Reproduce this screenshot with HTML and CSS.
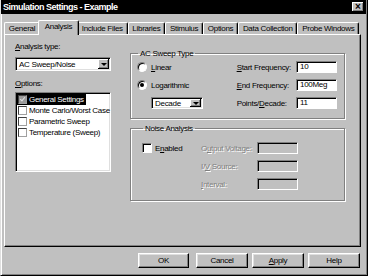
FILE: index.html
```html
<!DOCTYPE html>
<html lang="en">
<head>
  <meta charset="UTF-8">
  <title>Simulation Settings - Example</title>
  <link rel="stylesheet" href="styles.css">
</head>
<body>
  <div class="window">
    <div class="titlebar">
      <span class="title">Simulation Settings - Example</span>
      <span class="close">&#215;</span>
    </div>
    <div class="body">
      <ul class="tabs">
        <li>General</li>
        <li class="active">Analysis</li>
        <li>Include Files</li>
        <li>Libraries</li>
        <li>Stimulus</li>
        <li>Options</li>
        <li>Data Collection</li>
        <li>Probe Windows</li>
      </ul>

      <div class="panel">
        <div class="left">
          <div class="label"><u>A</u>nalysis type:</div>
          <div class="select">
            <span>AC Sweep/Noise</span>
            <span class="drop"></span>
          </div>
          <div class="label options-label"><u>O</u>ptions:</div>
          <ul class="list">
            <li class="sel"><span class="cb checked"></span><span>General Settings</span></li>
            <li><span class="cb"></span><span>Monte Carlo/Worst Case</span></li>
            <li><span class="cb"></span><span>Parametric Sweep</span></li>
            <li><span class="cb"></span><span>Temperature (Sweep)</span></li>
          </ul>
        </div>

        <div class="right">
          <fieldset class="group sweep">
            <legend>AC Sweep Type</legend>
            <div class="sweep-grid">
              <div class="radio-row"><span class="radio"></span><span><u>L</u>inear</span></div>
              <span class="field-label"><u>S</u>tart Frequency:</span>
              <span class="input">10</span>

              <div class="radio-row"><span class="radio on"></span><span>Lo<u>g</u>arithmic</span></div>
              <span class="field-label"><u>E</u>nd Frequency:</span>
              <span class="input">100Meg</span>

              <div class="select small">
                <span>Decade</span>
                <span class="drop"></span>
              </div>
              <span class="field-label">Points/<u>D</u>ecade:</span>
              <span class="input">11</span>
            </div>
          </fieldset>

          <fieldset class="group noise">
            <legend>Noise Analysis</legend>
            <div class="noise-grid">
              <div class="check-row"><span class="check"></span><span>E<u>n</u>abled</span></div>
              <span class="field-label disabled">O<u>u</u>tput Voltage:</span>
              <span class="input off"></span>

              <span></span>
              <span class="field-label disabled">I/<u>V</u> Source:</span>
              <span class="input off"></span>

              <span></span>
              <span class="field-label disabled"><u>I</u>nterval:</span>
              <span class="input off"></span>
            </div>
          </fieldset>
        </div>
      </div>

      <div class="buttons">
        <button class="btn ok">OK</button>
        <button class="btn">Cancel</button>
        <button class="btn"><u>A</u>pply</button>
        <button class="btn">Help</button>
      </div>
    </div>
  </div>
</body>
</html>
```

FILE: styles.css
```css
body {
  margin: 0;
  background: #c0c0c0;
}

.window {
  box-sizing: border-box;
  width: 368px;
  height: 276px;
  background: #c0c0c0;
  border-left: 1px solid #dfdfdf;
  border-right: 1px solid #000;
  border-bottom: 1px solid #000;
  box-shadow: inset 1px 0 #fff, inset -1px -1px #808080;
  font-family: "Liberation Sans", Arial, sans-serif;
  font-size: 8px;
  letter-spacing: -0.3px;
  color: #000;
  white-space: nowrap;
}

u {
  text-underline-offset: 1px;
}

/* title bar */
.titlebar {
  height: 14px;
  margin-right: 1px;
  padding: 0 2px;
  background: #000;
  color: #fff;
  display: flex;
  align-items: center;
  justify-content: space-between;
}

.title {
  font-size: 9px;
  font-weight: bold;
  letter-spacing: -0.5px;
}

.close {
  width: 12px;
  height: 10px;
  background: #c0c0c0;
  color: #000;
  box-shadow: inset -1px -1px #000, inset 1px 1px #fff, inset -2px -2px #808080;
  font-size: 10px;
  font-weight: bold;
  line-height: 10px;
  letter-spacing: 0;
  text-align: center;
}

.body {
  padding: 6px 6px 0 3px;
}

/* tabs */
.tabs {
  display: flex;
  align-items: flex-end;
  height: 14px;
  margin: 0;
  padding: 0;
  list-style: none;
  position: relative;
  z-index: 1;
}

.tabs li {
  box-sizing: border-box;
  height: 12px;
  padding: 0 3.8px;
  line-height: 11px;
  border: 1px solid;
  border-color: #fff #000 transparent #fff;
  border-bottom: none;
  border-radius: 2px 2px 0 0;
  box-shadow: inset -1px 0 #808080;
  background: #c0c0c0;
}

.tabs li.active {
  height: 15px;
  margin: 0 -2px -1px;
  padding: 0 5.8px;
  line-height: 12px;
  position: relative;
}

/* main panel */
.panel {
  box-sizing: border-box;
  height: 213px;
  padding: 6px 0 0 10px;
  border: 1px solid;
  border-color: #fff #000 #000 #fff;
  box-shadow: inset -1px -1px #808080;
  display: flex;
  gap: 19px;
}

.left {
  width: 96px;
}

.label {
  line-height: 11px;
}

.options-label {
  margin-top: 7px;
}

.select {
  box-sizing: border-box;
  height: 14px;
  margin-top: 5px;
  padding-left: 3px;
  background: #fff;
  border: 1px solid;
  border-color: #808080 #fff #fff #808080;
  box-shadow: inset 1px 1px #000, inset -1px -1px #dfdfdf;
  display: flex;
  align-items: center;
}

.drop {
  box-sizing: border-box;
  width: 11px;
  height: 10px;
  margin: 0 1px 0 auto;
  background: #c0c0c0;
  box-shadow: inset -1px -1px #000, inset 1px 1px #fff, inset -2px -2px #808080;
  display: flex;
  align-items: center;
  justify-content: center;
}

.drop::after {
  content: "";
  border-top: 3px solid #000;
  border-left: 3px solid transparent;
  border-right: 3px solid transparent;
}

.list {
  box-sizing: border-box;
  height: 80px;
  margin: 3px 0 0;
  padding: 1px 0 0 1px;
  list-style: none;
  background: #fff;
  border: 1px solid;
  border-color: #808080 #fff #fff #808080;
  box-shadow: inset 1px 1px #000, inset -1px -1px #dfdfdf;
}

.list li {
  width: fit-content;
  height: 11px;
  padding-right: 2px;
  line-height: 11px;
  display: flex;
  align-items: center;
  gap: 2px;
}

.list li.sel {
  background: #000;
  color: #fff;
}

.cb {
  box-sizing: border-box;
  width: 9px;
  height: 9px;
  margin-left: 1px;
  background: #fff;
  border: 1px solid;
  border-color: #404040 #a0a0a0 #a0a0a0 #404040;
}

.cb.checked {
  background: #9a9a9a;
  position: relative;
}

.cb.checked::after {
  content: "";
  position: absolute;
  left: 2px;
  top: 0;
  width: 2px;
  height: 4px;
  border: solid #e0e0e0;
  border-width: 0 1px 1px 0;
  transform: rotate(40deg);
}

/* group boxes */
.right {
  width: 215px;
}

.group {
  margin: 7px 0 0;
  border: 1px solid #808080;
  box-shadow: 1px 1px 0 #fff, inset 1px 1px 0 #fff;
  min-width: 0;
}

.group legend {
  margin-left: 1px;
  padding: 0 2px;
  line-height: 11px;
}

.sweep {
  padding: 2px 7px 9px 6px;
}

.sweep-grid {
  display: grid;
  grid-template-columns: 1fr auto 41px;
  grid-auto-rows: 12px;
  row-gap: 6px;
  column-gap: 5px;
  align-items: center;
}

.radio-row,
.check-row {
  display: flex;
  align-items: center;
  gap: 4px;
}

.radio {
  box-sizing: border-box;
  width: 10px;
  height: 10px;
  border-radius: 50%;
  background: #fff;
  border: 1px solid;
  border-color: #808080 #fff #fff #808080;
  box-shadow: inset 1px 1px #000;
  display: flex;
  align-items: center;
  justify-content: center;
}

.radio.on::after {
  content: "";
  width: 4px;
  height: 4px;
  border-radius: 50%;
  background: #000;
}

.select.small {
  width: 52px;
  height: 12px;
  margin: 0 0 0 14px;
}

.select.small .drop {
  height: 8px;
}

.field-label {
  line-height: 11px;
}

.field-label.disabled {
  color: #808080;
  text-shadow: 1px 1px #fff;
}

.input {
  box-sizing: border-box;
  height: 12px;
  padding-left: 3px;
  line-height: 10px;
  background: #fff;
  border: 1px solid;
  border-color: #808080 #fff #fff #808080;
  box-shadow: inset 1px 1px #000;
}

.input.off {
  background: #c0c0c0;
}

.noise {
  margin-top: 4px;
  padding: 8px 0 10px 11px;
}

.noise-grid {
  display: grid;
  grid-template-columns: 59px 56px 41px;
  grid-auto-rows: 12px;
  row-gap: 6px;
  align-items: center;
}

.check {
  box-sizing: border-box;
  width: 10px;
  height: 10px;
  background: #fff;
  border: 1px solid;
  border-color: #808080 #fff #fff #808080;
  box-shadow: inset 1px 1px #000;
}

.check-row {
  gap: 3px;
}

/* dialog buttons */
.buttons {
  display: flex;
  justify-content: flex-end;
  gap: 4px;
  margin-top: 6px;
  padding-right: 1px;
}

.btn {
  box-sizing: border-box;
  width: 52px;
  height: 15px;
  padding: 0;
  background: #c0c0c0;
  border: 1px solid;
  border-color: #fff #000 #000 #fff;
  box-shadow: inset -1px -1px #808080, inset 1px 1px #dfdfdf;
  font-family: inherit;
  font-size: 8px;
  letter-spacing: -0.3px;
  color: #000;
}

.btn.ok {
  width: 51px;
  margin-right: 3px;
}
```
